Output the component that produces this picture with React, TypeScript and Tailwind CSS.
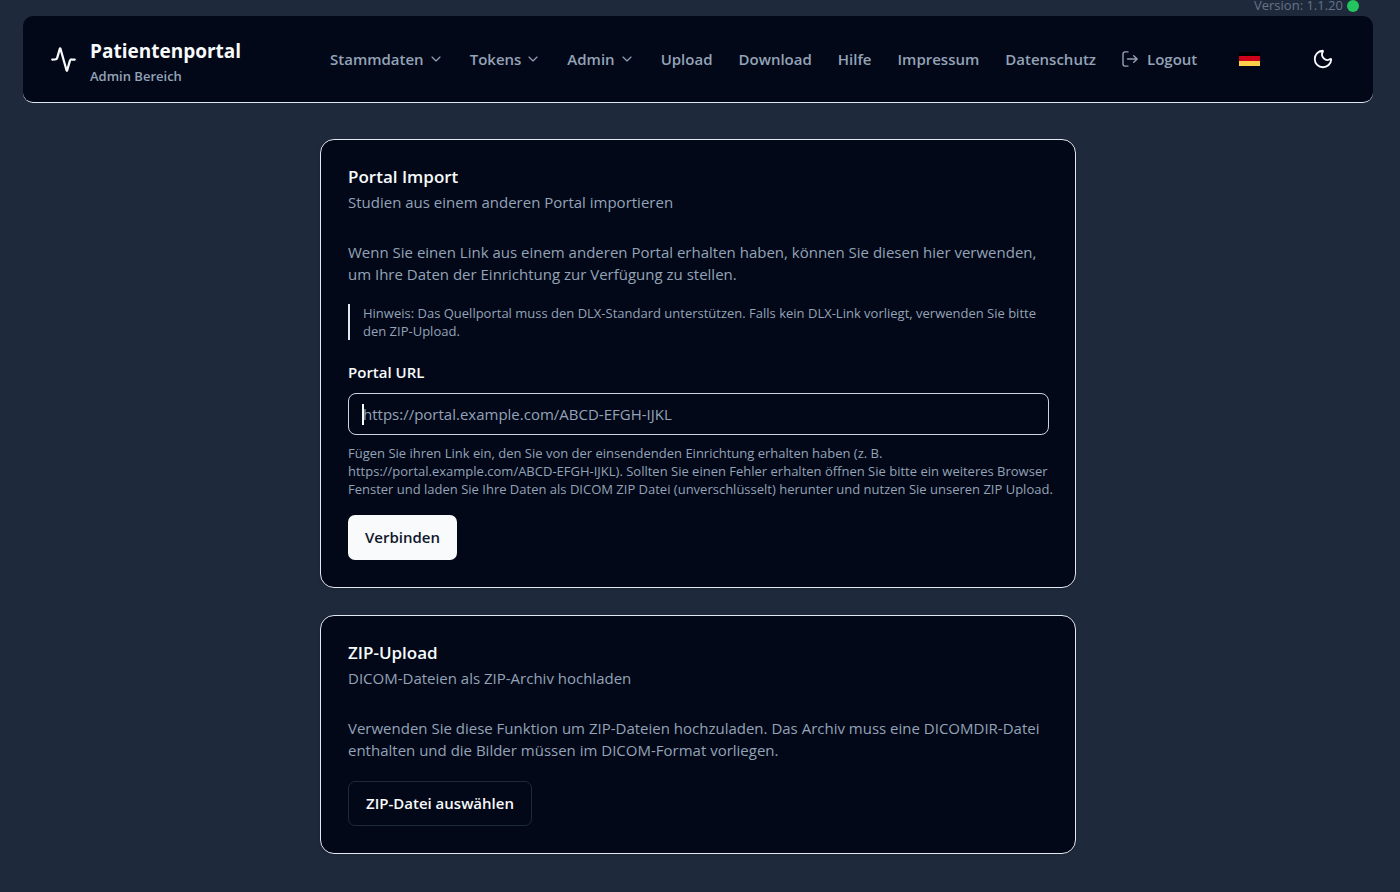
import type { ReactNode } from "react";
import { Activity, Moon, ChevronDown } from "lucide-react";

function ExitIcon() {
  return (
    <svg
      viewBox="0 0 16 16"
      className="size-4"
      fill="none"
      stroke="currentColor"
      strokeWidth="1.4"
      strokeLinecap="round"
      strokeLinejoin="round"
      aria-hidden="true"
    >
      <path d="M6 .9H3A2 2 0 0 0 1 2.900V13.100A2 2 0 0 0 3 15.100H6" />
      <path d="M5.500 8H15.200M11.700 4.700 15.200 8l-3.500 3.300" />
    </svg>
  );
}

function GermanFlag() {
  return (
    <svg viewBox="0 0 21 14" className="h-[14px] w-[21px]" aria-hidden="true">
      <rect width="21" height="5" fill="#000" />
      <rect y="4" width="21" height="5" fill="#d0021b" />
      <rect y="9" width="21" height="5" fill="#ffce4b" />
    </svg>
  );
}

function MenuButton({ children }: { children: ReactNode }) {
  return (
    <button type="button" className="flex items-center gap-1">
      {children}
      <ChevronDown className="size-4" strokeWidth={1.75} aria-hidden="true" />
    </button>
  );
}

function Card({ title, subtitle, children }: { title: string; subtitle: string; children: ReactNode }) {
  return (
    <section className="rounded-[14px] border border-[#e2e8f0] bg-[#020817] py-[26px] pr-[26px] pl-[27px] pb-[27px] shadow-sm">
      <h2 className="text-[17px] leading-[22px] font-semibold text-[#f8fafc]">{title}</h2>
      <p className="mt-[3px] text-[15px] leading-[22px]">{subtitle}</p>
      <div className="mt-7">{children}</div>
    </section>
  );
}

export default function App() {
  return (
    <div className="min-h-screen bg-[#1e293b] pr-[27px] pb-[38px] pl-[23px] font-['Open_Sans','Noto_Sans',sans-serif] text-[#94a3b8]">
      <div className="flex h-4 items-start justify-end gap-1 pr-[14px] text-[13px] leading-[11px] text-[#64748b]">
        <span>Version: 1.1.20</span>
        <span className="size-3 rounded-full bg-[#22c55e]" />
      </div>

      <header className="flex h-[87px] items-center rounded-[10px] border-b border-[#e2e8f0] bg-[#020817] pr-[39px] pl-[27px]">
        <div className="flex w-[280px] shrink-0 items-center gap-[13px]">
          <Activity className="size-[27px] text-[#f8fafc]" aria-hidden="true" />
          <div className="pt-[7px]">
            <h1 className="text-[19px] leading-[26px] font-bold text-[#f8fafc]">Patientenportal</h1>
            <p className="text-[13px] leading-6 font-semibold">Admin Bereich</p>
          </div>
        </div>
        <nav className="flex flex-1 items-center gap-[26px] text-[15px] leading-[22px] font-semibold">
          <MenuButton>Stammdaten</MenuButton>
          <MenuButton>Tokens</MenuButton>
          <MenuButton>Admin</MenuButton>
          <a href="#upload">Upload</a>
          <a href="#download">Download</a>
          <a href="#hilfe">Hilfe</a>
          <a href="#impressum">Impressum</a>
          <a href="#datenschutz">Datenschutz</a>
          <button type="button" className="flex items-center gap-[9px]">
            <ExitIcon />
            Logout
          </button>
        </nav>
        <div className="flex items-center gap-[52px]">
          <button type="button" aria-label="Sprache: Deutsch">
            <GermanFlag />
          </button>
          <button type="button" aria-label="Dunkler Modus" className="text-[#f8fafc]">
            <Moon className="size-[22px]" />
          </button>
        </div>
      </header>

      <main className="mx-auto mt-9 flex max-w-[756px] flex-col gap-[27px]">
        <Card title="Portal Import" subtitle="Studien aus einem anderen Portal importieren">
          <p className="text-[15px] leading-[22px]">
            Wenn Sie einen Link aus einem anderen Portal erhalten haben, können Sie diesen hier verwenden, um Ihre Daten
            der Einrichtung zur Verfügung zu stellen.
          </p>
          <p className="mt-[19px] border-l-2 border-[#e2e8f0] pl-[13px] text-[13px] leading-[18px]">
            Hinweis: Das Quellportal muss den DLX-Standard unterstützen. Falls kein DLX-Link vorliegt, verwenden Sie
            bitte den ZIP-Upload.
          </p>
          <label htmlFor="portal-url" className="mt-[21px] block text-[15px] leading-[22px] font-semibold text-[#f8fafc]">
            Portal URL
          </label>
          <div className="relative mt-[10px]">
            <input
              id="portal-url"
              type="url"
              placeholder="https://portal.example.com/ABCD-EFGH-IJKL"
              className="block h-[42px] w-full rounded-lg border border-[#cbd5e1] bg-transparent px-[14px] text-[15px] text-[#f8fafc] outline-none placeholder:text-[#94a3b8]"
            />
            <span className="absolute top-[11px] left-[14px] h-[21px] w-0.5 bg-[#f8fafc]" aria-hidden="true" />
          </div>
          <p className="mt-[9px] -mr-3 text-[13px] leading-[18px]">
            Fügen Sie ihren Link ein, den Sie von der einsendenden Einrichtung erhalten haben (z. B.
            https://portal.example.com/ABCD-EFGH-IJKL). Sollten Sie einen Fehler erhalten öffnen Sie bitte ein weiteres
            Browser Fenster und laden Sie Ihre Daten als DICOM ZIP Datei (unverschlüsselt) herunter und nutzen Sie
            unseren ZIP Upload.
          </p>
          <button
            type="button"
            className="mt-[17px] h-[45px] rounded-[7px] bg-[#f8fafc] px-[17px] text-[15px] font-semibold text-[#0f172a]"
          >
            Verbinden
          </button>
        </Card>

        <Card title="ZIP-Upload" subtitle="DICOM-Dateien als ZIP-Archiv hochladen">
          <p className="text-[15px] leading-[22px]">
            Verwenden Sie diese Funktion um ZIP-Dateien hochzuladen. Das Archiv muss eine DICOMDIR-Datei enthalten und
            die Bilder müssen im DICOM-Format vorliegen.
          </p>
          <button
            type="button"
            className="mt-5 h-[45px] rounded-[7px] border border-[#1e293b] px-[17px] text-[15px] font-semibold text-[#f8fafc]"
          >
            ZIP-Datei auswählen
          </button>
        </Card>
      </main>
    </div>
  );
}
